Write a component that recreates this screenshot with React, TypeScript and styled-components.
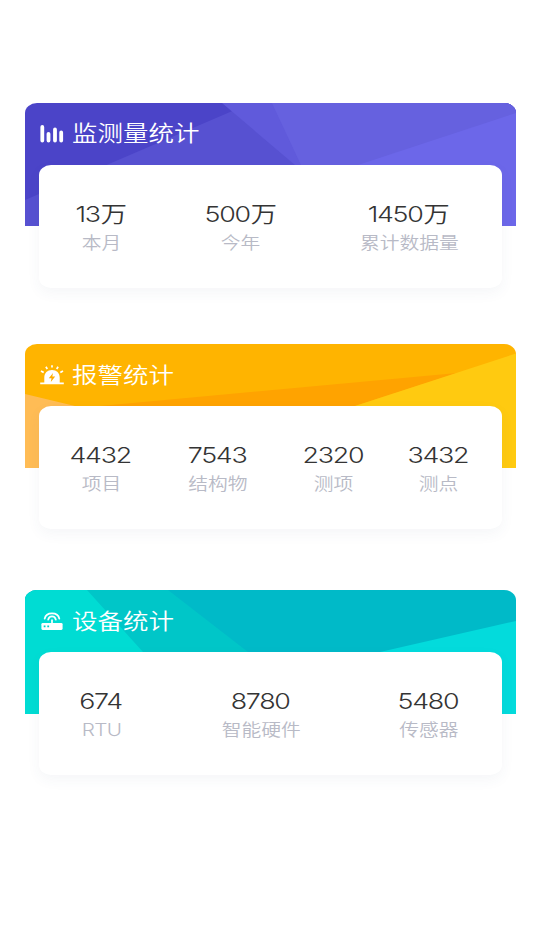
import React from "react";
import styled, { createGlobalStyle } from "styled-components";

const GlobalStyle = createGlobalStyle`
  * { box-sizing: border-box; }
  body {
    margin: 0;
    background: #fff;
    font-family: Inter, "Noto Sans CJK SC", sans-serif;
  }
`;

const Page = styled.main`
  display: flex;
  flex-direction: column;
  width: 534px;
  height: 950px;
  padding: 103px 18px 0 25px;
  overflow: hidden;
  background: #fff;
`;

const Card = styled.section<{ $gap: number }>`
  position: relative;
  height: 185px;
  margin-bottom: ${(p) => p.$gap}px;
  padding: 0 14px 0 14.4px;
`;

const Backdrop = styled.svg`
  position: absolute;
  top: 0;
  left: 0;
  width: 491px;
  height: 123.4px;
  border-radius: 12px 12px 0 0 / 10px 10px 0 0;
`;

const Header = styled.header`
  position: relative;
  display: flex;
  align-items: center;
  height: 62px;
`;

const IconSlot = styled.svg`
  width: 26px;
  height: 24px;
  margin: 0 0 1px -0.6px;
  flex: none;
`;

const Title = styled.h2`
  margin: 0 0 1.6px 7.4px;
  color: #fff;
  font-size: 21.5px;
  font-weight: 350;
  line-height: 30px;
  white-space: nowrap;
  transform: scaleX(1.185);
  transform-origin: left center;
`;

const Panel = styled.div<{ $columns: string }>`
  position: relative;
  display: grid;
  grid-template-columns: ${(p) => p.$columns};
  height: 123px;
  padding-top: 35px;
  border-radius: 12px / 10px;
  background: #fff;
  box-shadow: 0 5px 14px rgba(60, 70, 110, 0.05);
`;

const Stat = styled.div`
  display: flex;
  flex-direction: column;
  align-items: center;
  white-space: nowrap;
`;

const Value = styled.span`
  color: #343434;
  font-size: 22px;
  font-weight: 350;
  line-height: 28px;
  letter-spacing: -1.05px;
  margin-right: 1.9px;
  transform: scaleX(1.22);
`;

const Unit = styled.span`
  margin-left: 0.8px;
  font-size: 21.5px;
`;

const Label = styled.span<{ $latin: boolean }>`
  color: #b8bac6;
  margin-top: 0.8px;
  font-size: ${(p) => (p.$latin ? 17.4 : 16.6)}px;
  font-weight: 350;
  line-height: 28px;
  letter-spacing: ${(p) => (p.$latin ? -0.6 : 0)}px;
  transform: scaleX(1.19);
`;

const BarsIcon = () => (
  <IconSlot viewBox="0 0 26 24" fill="none" stroke="#fff" strokeWidth="3.8" strokeLinecap="round">
    <path d="M3.3 4.9v13.6M9.5 11.8v6.7M16 7.4v11.1M22.2 10.4v8.1" />
  </IconSlot>
);

const AlarmIcon = () => (
  <IconSlot viewBox="0 0 26 24">
    <path d="M5.3 19.5V14.5C5.3 9.8 8.4 6.9 13 6.9s7.7 2.9 7.7 7.6v5h4.1v1.8H1.2v-1.8z" fill="#fff" />
    <path d="M13 2.3v2.3M6.9 3.7l1.4 2.3M19.1 3.7l-1.4 2.3M2 8l2.7 1.6M24 8l-2.7 1.6" stroke="#fff" strokeWidth="1.7" />
    <path d="M14 9.9l-4.2 5.3h2.7L11.8 18.9l4.4-5.5h-2.9z" fill="#ffad00" />
  </IconSlot>
);

const RouterIcon = () => (
  <IconSlot viewBox="0 0 26 24">
    <rect x="2.4" y="13.9" width="21.2" height="7" rx="1.3" fill="#fff" />
    <path d="M13 10.4v4" stroke="#fff" strokeWidth="1.7" />
    <path d="M5.7 9.6C7.2 2.6 18.8 2.6 20.3 9.6M9.2 10.6c1-4.2 6.6-4.2 7.6 0" fill="none" stroke="#fff" strokeWidth="1.8" strokeLinecap="round" />
    <path d="M4.7 17.4h1.8M8.3 17.4h1.8" stroke="#00cfc9" strokeWidth="1.6" />
  </IconSlot>
);

type Facet = { points: string; fill: string };
type Item = { value: string; unit?: string; label: string };
type Group = {
  title: string;
  Icon: React.FC;
  base: string;
  facets: Facet[];
  columns: string;
  gap: number;
  items: Item[];
};

const groups: Group[] = [
  {
    title: "监测量统计",
    Icon: BarsIcon,
    base: "#4b44c8",
    facets: [
      { points: "0,97 226,0 491,0 491,124 0,124", fill: "#5751d1" },
      { points: "197,0 491,0 491,124 343,124", fill: "#605adb" },
      { points: "247,0 491,0 491,124 305,124", fill: "#6661df" },
      { points: "333,62 491,10 491,124 145,124", fill: "#6c67e9" },
    ],
    columns: "124px 155px 182px",
    gap: 56.4,
    items: [
      { value: "13", unit: "万", label: "本月" },
      { value: "500", unit: "万", label: "今年" },
      { value: "1450", unit: "万", label: "累计数据量" },
    ],
  },
  {
    title: "报警统计",
    Icon: AlarmIcon,
    base: "#ffb400",
    facets: [
      { points: "0,50 50,62 200,98 200,124 0,124", fill: "#ffbc55" },
      { points: "75,62 432,29 330,62", fill: "#ffa300" },
      { points: "330,62 491,9.5 491,124 140,124", fill: "#ffca10" },
    ],
    columns: "124px 109px 122px 88px",
    gap: 61,
    items: [
      { value: "4432", label: "项目" },
      { value: "7543", label: "结构物" },
      { value: "2320", label: "测项" },
      { value: "3432", label: "测点" },
    ],
  },
  {
    title: "设备统计",
    Icon: RouterIcon,
    base: "#00bac8",
    facets: [
      { points: "0,0 143,0 223,62 303,124 0,124", fill: "#00c6c8" },
      { points: "0,0 62,0 118,62 174,124 0,124", fill: "#00dcd3" },
      { points: "355,62 491,31 491,124 83,124", fill: "#03dbdc" },
    ],
    columns: "125px 193px 142px",
    gap: 0,
    items: [
      { value: "674", label: "RTU" },
      { value: "8780", label: "智能硬件" },
      { value: "5480", label: "传感器" },
    ],
  },
];

export default function App() {
  return (
    <>
      <GlobalStyle />
      <Page>
        {groups.map(({ title, Icon, base, facets, columns, gap, items }) => (
          <Card key={title} $gap={gap}>
            <Backdrop viewBox="0 0 491 123.5" preserveAspectRatio="none" aria-hidden="true">
              <rect width="491" height="124" fill={base} />
              {facets.map((f) => (
                <polygon key={f.points} points={f.points} fill={f.fill} />
              ))}
            </Backdrop>
            <Header>
              <Icon />
              <Title>{title}</Title>
            </Header>
            <Panel $columns={columns}>
              {items.map((item) => (
                <Stat key={item.label}>
                  <Value>
                    {item.value}
                    {item.unit && <Unit>{item.unit}</Unit>}
                  </Value>
                  <Label $latin={/^[A-Z]+$/.test(item.label)}>{item.label}</Label>
                </Stat>
              ))}
            </Panel>
          </Card>
        ))}
      </Page>
    </>
  );
}
